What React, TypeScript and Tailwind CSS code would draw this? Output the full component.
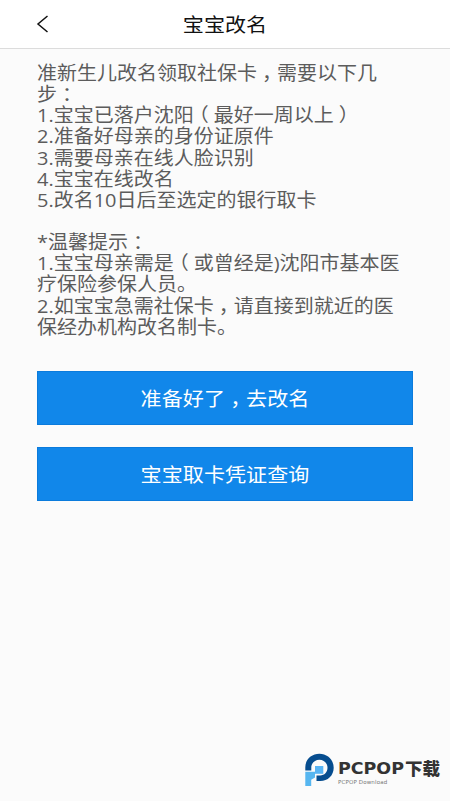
import React from 'react';

function Mark({ children }: { children: string }) {
  return <span className="inline-block w-[1em] text-center [font-feature-settings:'halt']">{children}</span>;
}

function Line({ children }: { children?: React.ReactNode }) {
  return <div className="h-[21.15px] origin-[50%_60%] scale-y-[0.94] leading-[21.15px] whitespace-nowrap">{children}</div>;
}

function Logo() {
  return (
    <svg className="block h-[34px] w-[30px]" viewBox="0 0 30 34" fill="none">
      <path d="M.3 17.5V14.3C.3 6.5 6.5.8 14.4.8S28.7 6.8 28.7 14.8c0 7.8-6 13.3-13.4 13.3H11.5V22.5h3.6c4.4 0 7.4-3.3 7.4-7.7 0-4.6-3.5-8-8.1-8-4.2 0-7.4 2.7-8.1 6.6V17.5z" fill="#064d8f" />
      <path d="M10 13h8.3v7.8H10z" fill="#58b4f4" />
      <path d="M.3 18.7H10v5.8l-3.8 2.3V33H.3z" fill="#56b6f0" />
    </svg>
  );
}

export default function App() {
  return (
    <div className="flex h-[801px] w-[450px] flex-col overflow-hidden bg-[#fbfbfb] font-['Open_Sans','Noto_Sans_CJK_SC',sans-serif]">
      <header className="grid h-[49px] shrink-0 grid-cols-[1fr_auto_1fr] items-center border-b border-[#dcdcdc] bg-white">
        <svg className="ml-[36px] h-[18px] w-[13px]" viewBox="0 0 13 18" fill="none" stroke="#111" strokeWidth="1.5">
          <path d="M11.5 1L2 9L11.5 17" />
        </svg>
        <h1 className="scale-y-[0.93] pt-[2px] text-[21.1px] leading-[30px] text-[#111]">宝宝改名</h1>
        <span />
      </header>
      <main className="flex flex-col px-[37px] pt-[13px]">
        <div className="text-[20px] text-[#5c5c5c]">
          <Line>准新生儿改名领取社保卡<Mark>，</Mark>需要以下几</Line>
          <Line>步<Mark>：</Mark></Line>
          <Line>1.宝宝已落户沈阳<Mark>（</Mark>最好一周以上<Mark>）</Mark></Line>
          <Line>2.准备好母亲的身份证原件</Line>
          <Line>3.需要母亲在线人脸识别</Line>
          <Line>4.宝宝在线改名</Line>
          <Line>5.改名10日后至选定的银行取卡</Line>
          <Line />
          <Line>*温馨提示<Mark>：</Mark></Line>
          <Line>1.宝宝母亲需是<Mark>（</Mark>或曾经是)沈阳市基本医</Line>
          <Line>疗保险参保人员。</Line>
          <Line>2.如宝宝急需社保卡<Mark>，</Mark>请直接到就近的医</Line>
          <Line>保经办机构改名制卡。</Line>
        </div>
        <div className="mt-[34px] flex flex-col gap-[22px] text-[21.1px] text-white">
          <button className="h-[54px] w-[376px] border border-[#0b7bdc] bg-[#1187ea]"><span className="inline-block scale-y-[0.94] pt-[1px]">准备好了<Mark>，</Mark>去改名</span></button>
          <button className="h-[54px] w-[376px] border border-[#0b7bdc] bg-[#1187ea]"><span className="inline-block scale-y-[0.94] pt-[1px]">宝宝取卡凭证查询</span></button>
        </div>
      </main>
      <footer className="mt-auto flex pb-[14px] pl-[305px]">
        <Logo />
        <div className="flex flex-col pl-[3px] pt-[5px]">
          <div className="flex h-[21px] items-center whitespace-nowrap leading-[21px] text-[#333]">
            <span className="w-[67px] shrink-0"><span className="inline-block origin-left scale-x-[1.09] font-['DejaVu_Sans'] text-[16px] font-bold">PCPOP</span></span>
            <span className="text-[17.5px] font-black">下载</span>
          </div>
          <div className="h-[8px] pt-[-1px] font-['DejaVu_Sans'] text-[5.5px] leading-[6px] tracking-[0.15px] text-[#777]">PCPOP Download</div>
        </div>
      </footer>
    </div>
  );
}
